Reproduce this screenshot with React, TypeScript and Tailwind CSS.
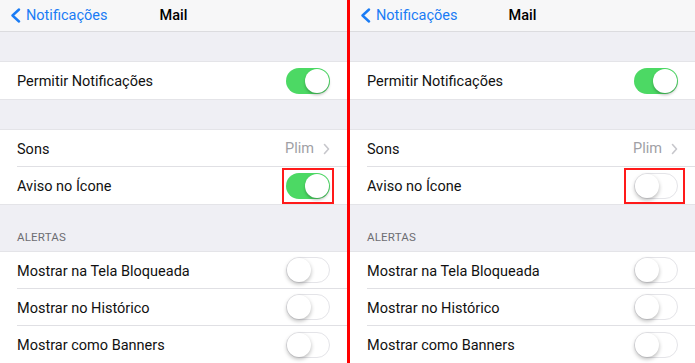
import React from "react";

const font = { fontFamily: "Roboto, 'Noto Sans', sans-serif" };

function Toggle({ on }: { on: boolean }) {
  return on ? (
    <div className="w-[44px] h-[26px] rounded-full bg-[#4cd964] flex items-center justify-end pr-[1px]">
      <div className="w-[24px] h-[24px] rounded-full bg-white shadow-[0_2px_3px_rgba(0,0,0,0.25)]" />
    </div>
  ) : (
    <div className="w-[44px] h-[26px] rounded-full bg-white border border-[#e4e4e8] flex items-center justify-start">
      <div className="w-[24px] h-[24px] rounded-full bg-white shadow-[0_2px_4px_rgba(0,0,0,0.28)]" />
    </div>
  );
}

function Row({
  label,
  right,
  sep = false,
}: {
  label: string;
  right: React.ReactNode;
  sep?: boolean;
}) {
  return (
    <div className="pl-[17px] bg-white">
      <div
        className={
          "h-[37px] flex items-center justify-between pr-[17px] " +
          (sep ? "border-b border-[#e0e0e4]" : "")
        }
      >
        <span className="text-[14.5px] text-[#111] pt-[3px]">{label}</span>
        {right}
      </div>
    </div>
  );
}

function Panel({ avisoOn, boxClass }: { avisoOn: boolean; boxClass: string }) {
  return (
    <div className="flex-1 bg-[#efeff4] overflow-hidden" style={font}>
      <div className="h-[32px] bg-[#f7f7f8] border-b border-[#dcdcdf] grid grid-cols-[1fr_auto_1fr] items-center">
        <div className="flex items-center pl-[10px] gap-[5px] text-[#1a7cf5]">
          <svg width="11" height="15" viewBox="0 0 11 15">
            <polyline
              points="9,1.5 2.5,7.5 9,13.5"
              fill="none"
              stroke="#1a7cf5"
              strokeWidth="2.4"
              strokeLinecap="round"
              strokeLinejoin="round"
            />
          </svg>
          <span className="text-[14.5px]">Notificações</span>
        </div>
        <div className="text-[14.5px] font-medium text-black">Mail</div>
        <div />
      </div>
      <div className="h-[29px]" />
      <div className="border-y border-[#e4e4e8]">
        <Row label="Permitir Notificações" right={<Toggle on />} />
      </div>
      <div className="h-[29px]" />
      <div className="border-y border-[#e4e4e8]">
        <Row
          label="Sons"
          sep
          right={
            <div className="flex items-center gap-[9px] pt-[2px]">
              <span className="text-[14.5px] text-[#a0a0a5]">Plim</span>
              <svg width="7" height="12" viewBox="0 0 7 12">
                <polyline
                  points="1.5,1.5 5.5,6 1.5,10.5"
                  fill="none"
                  stroke="#c7c7cc"
                  strokeWidth="1.6"
                  strokeLinecap="round"
                  strokeLinejoin="round"
                />
              </svg>
            </div>
          }
        />
        <Row
          label="Aviso no Ícone"
          right={
            <div className="relative">
              <Toggle on={avisoOn} />
              <div className={"absolute border-2 border-[#ff1a1a] " + boxClass} />
            </div>
          }
        />
      </div>
      <div className="h-[46px] flex items-end pl-[17px] pb-[5px]">
        <span className="text-[11.5px] text-[#6d6d72] tracking-[0.2px]">ALERTAS</span>
      </div>
      <div className="border-t border-[#e4e4e8]">
        <Row label="Mostrar na Tela Bloqueada" sep right={<Toggle on={false} />} />
        <Row label="Mostrar no Histórico" sep right={<Toggle on={false} />} />
        <Row label="Mostrar como Banners" right={<Toggle on={false} />} />
      </div>
    </div>
  );
}

export default function App() {
  return (
    <div className="w-[695px] h-[363px] flex overflow-hidden bg-white">
      <div className="w-[347px] flex">
        <Panel avisoOn boxClass="-left-[4px] -right-[4px] -top-[5px] -bottom-[5px]" />
      </div>
      <div className="w-[3px] bg-[#ff0000]" />
      <div className="w-[345px] flex">
        <Panel avisoOn={false} boxClass="-left-[10px] -right-[7px] -top-[5px] -bottom-[5px]" />
      </div>
    </div>
  );
}
